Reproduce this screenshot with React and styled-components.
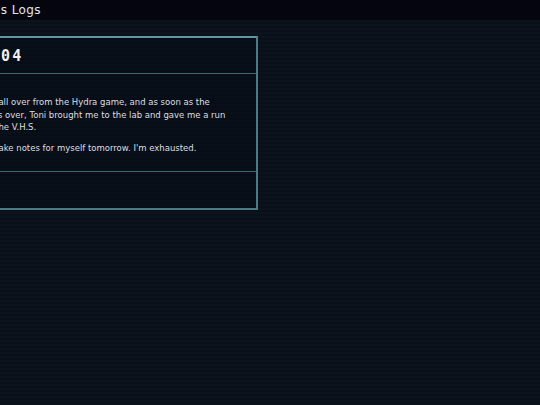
import React from 'react';
import styled, { createGlobalStyle } from 'styled-components';

const GlobalStyle = createGlobalStyle`
    html, body {
        margin: 0;
        padding: 0;
        background: #0a111a;
    }
`

const Page = styled.div`
    width: 540px;
    height: 405px;
    overflow: hidden;
    background-color: #0a111a;
    background-image: repeating-linear-gradient(
        to bottom,
        #0b131d 0px,
        #0b131d 2px,
        #09101a 2px,
        #09101a 4px
    );
    font-family: 'DejaVu Sans', 'Liberation Sans', sans-serif;
    color: #dfe3e8;
`

// the view is scrolled sideways, so the left part of the log sits off screen
const Scroller = styled.div`
    margin-left: -72px;
`

const TopBar = styled.header`
    height: 20px;
    display: flex;
    align-items: center;
    padding-left: 28px;
    background: #05050f;
    font-size: 12px;
    letter-spacing: 0.4px;
    color: #e4e6ea;
`

const Content = styled.main`
    padding: 16px;
`

const Card = styled.section`
    width: 314px;
    box-sizing: border-box;
    border: 2px solid #4a7b87;
    border-top-color: #5b96a2;
    background: rgba(5, 10, 18, 0.35);
`

const CardHead = styled.div`
    height: 35px;
    display: flex;
    align-items: center;
    padding-left: 11px;
    border-bottom: 1px solid #3c6873;
`

const Title = styled.h2`
    margin: 0;
    font-family: 'DejaVu Sans Mono', 'Liberation Mono', monospace;
    font-size: 15px;
    font-weight: bold;
    letter-spacing: 2px;
    color: #eef0f2;
`

const CardBody = styled.div`
    padding: 22px 13px 17px;
    border-bottom: 1px solid #3c6873;
`

const Para = styled.p`
    margin: 0 0 8px;
    font-size: 8.5px;
    line-height: 12.5px;
    color: #dcdfe4;
    white-space: nowrap;

    &:last-child {
        margin-bottom: 0;
    }
`

const CardFoot = styled.footer`
    height: 36px;
    display: flex;
    align-items: center;
    padding-left: 15px;
    font-size: 8.5px;
    color: #4a9aab;
`

const LogsPage = () => {
    return (
        <Page>
            <GlobalStyle />
            <Scroller>
                <TopBar>Dustin's Logs</TopBar>
                <Content>
                    <Card>
                        <CardHead>
                            <Title>LOG 04</Title>
                        </CardHead>
                        <CardBody>
                            <Para>
                                Still sore all over from the Hydra game, and as soon as the
                                <br />
                                game was over, Toni brought me to the lab and gave me a run
                                <br />
                                through the V.H.S.
                            </Para>
                            <Para>Need to take notes for myself tomorrow. I'm exhausted.</Para>
                        </CardBody>
                        <CardFoot>Tags: lab</CardFoot>
                    </Card>
                </Content>
            </Scroller>
        </Page>
    )
}

export default LogsPage
